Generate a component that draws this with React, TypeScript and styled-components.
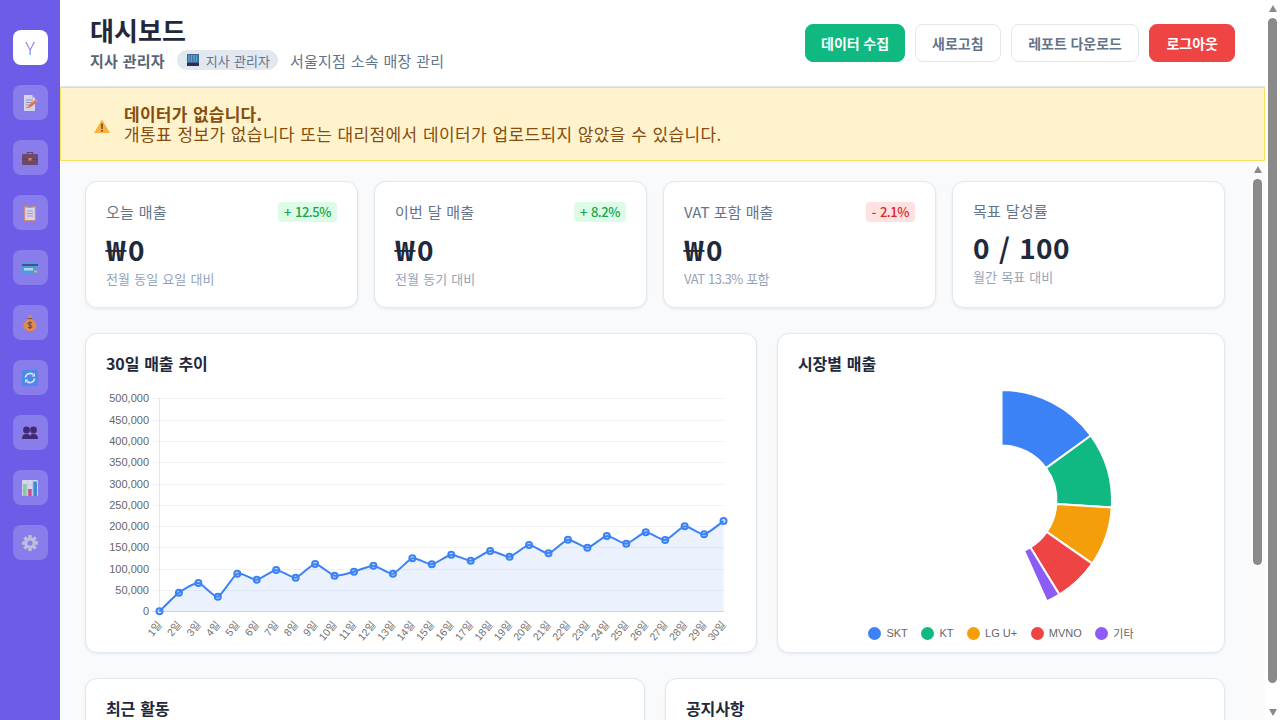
import React from 'react';
import styled, { createGlobalStyle } from 'styled-components';

const Global = createGlobalStyle`
  html, body { margin: 0; padding: 0; height: 100%; overflow: hidden; }
  body { font-family: "Noto Sans CJK KR", "Noto Sans", sans-serif; background: #fff; }
  #root { height: 100%; }
  * { box-sizing: border-box; }
`;

const Shell = styled.div`display: flex; width: 1280px; height: 720px; overflow: hidden;`;
const Sidebar = styled.nav`
  width: 60px; flex: none; background: #6c5ce7; display: flex; flex-direction: column;
  align-items: center; gap: 20px; padding-top: 30px;
`;
const NavButton = styled.div`
  width: 35px; height: 35px; flex: none; border-radius: 8px; background: rgba(255,255,255,.2);
  display: flex; align-items: center; justify-content: center;
`;
const Logo = styled(NavButton)`
  background: #fff; color: #6c5ce7; font: 300 18px "Open Sans", sans-serif;
`;
const Main = styled.div`flex: 1; min-width: 0; display: flex; flex-direction: column;`;
const Header = styled.header`
  height: 87px; flex: none; background: #fff; border-bottom: 1px solid #e2e8f0;
  display: flex; align-items: center; justify-content: space-between; padding: 0 30px;
`;
const HeadBlock = styled.div`padding-bottom: 2px;`;
const Title = styled.h1`
  margin: 0 0 4px; font-size: 26px; line-height: 32px; font-weight: 700; color: #1e293b; letter-spacing: .1px;
`;
const SubRow = styled.div`display: flex; align-items: center; gap: 12px; height: 20px;`;
const Role = styled.span`font-size: 15px; font-weight: 600; color: #5b6573; letter-spacing: .2px; word-spacing: 1.2px;`;
const Badge = styled.span`
  display: inline-flex; align-items: center; gap: 7px; height: 20px; padding: 0 8px 0 10px; border-radius: 10px;
  background: #e2e8f0; color: #64748b; font-size: 13px; letter-spacing: .04px; word-spacing: 1.3px;
`;
const Branch = styled.span`font-size: 15px; color: #64748b; letter-spacing: .2px; word-spacing: 1.2px;`;
const Actions = styled.div`display: flex; gap: 10px;`;
const Btn = styled.button<{ $kind?: 'green' | 'red'; $pad?: number }>`
  height: 38px; padding: 0 ${p => p.$pad ?? 16}px; border-radius: 8px; font: 600 14px "Noto Sans CJK KR", sans-serif;
  letter-spacing: 0; word-spacing: .5px; white-space: nowrap;
  border: 1px solid ${p => p.$kind === 'green' ? '#10b981' : p.$kind === 'red' ? '#ef4444' : '#e2e8f0'};
  background: ${p => p.$kind === 'green' ? '#10b981' : p.$kind === 'red' ? '#ef4444' : '#fff'};
  color: ${p => p.$kind ? '#fff' : '#64748b'};
`;
const Alert = styled.div`
  height: 74px; flex: none; background: #fff3cd; border: 1px solid #fde05a;
  display: flex; align-items: center; gap: 14px; padding: 0 33px; color: #854d0e;
`;
const AlertIcon = styled.svg`width: 16px; height: 16px; flex: none; margin-top: 4px;`;
const AlertText = styled.div`font-size: 17px; line-height: 20.5px; letter-spacing: .36px; word-spacing: 1.23px;`;
const AlertHead = styled.div`font-weight: 700; letter-spacing: .25px;`;
const Lower = styled.div`flex: 1; min-height: 0; display: flex; overflow: hidden;`;
const Content = styled.main`
  flex: 1; min-width: 0; background: #f8fafc; padding: 20px 25px; overflow: hidden;
  display: flex; flex-direction: column; gap: 25px;
`;
const StatGrid = styled.section`display: grid; grid-template-columns: repeat(4, 1fr); gap: 16px;`;
const Card = styled.div`
  background: #fff; border: 1px solid #e2e8f0; border-radius: 12px; box-shadow: 0 1px 3px rgba(0,0,0,.07);
`;
const StatCard = styled(Card)`padding: 20px; height: 127px;`;
const StatHead = styled.div`display: flex; align-items: center; justify-content: space-between; margin-bottom: 9px;`;
const StatLabel = styled.span<{ $tight?: boolean }>`
  font-size: 15px; line-height: 18px; color: #64748b; word-spacing: 1.1px;
  letter-spacing: ${p => p.$tight ? '-.05px' : '.2px'};
`;
const Delta = styled.span<{ $down?: boolean }>`
  height: 20px; padding: 0 6px; border-radius: 4px; font-size: 13px; line-height: 20px; font-weight: 500;
  letter-spacing: -.45px; word-spacing: 1.5px;
  background: ${p => p.$down ? '#fee2e2' : '#dcfce7'}; color: ${p => p.$down ? '#dc2626' : '#16a34a'};
`;
const StatValue = styled.div`font-size: 28px; line-height: 36px; font-weight: 700; color: #1e293b; letter-spacing: .3px; word-spacing: 2.5px;`;
const Won = styled.span`display: inline-block; width: 22px; transform: scaleX(1.2); transform-origin: left center; letter-spacing: 0;`;
const StatNote = styled.div<{ $tight?: boolean }>`
  margin-top: 3px; font-size: 13px; line-height: 17px; color: #94a3b8; word-spacing: 1.2px;
  letter-spacing: ${p => p.$tight ? '-.55px' : '.04px'};
`;
const ChartGrid = styled.section`display: grid; grid-template-columns: 3fr 2fr; gap: 20px;`;
const ChartCard = styled(Card)`padding: 20px 20px 8px; height: 320px; display: flex; flex-direction: column;`;
const CardTitle = styled.h3`
  margin: 0 0 12px; font-size: 16px; line-height: 18px; font-weight: 700; color: #1e293b; letter-spacing: -.1px; word-spacing: 1.4px;
`;
const PlotSvg = styled.svg`display: block; width: 630px; height: 260px; overflow: visible;`;
const PieSvg = styled.svg`display: block; width: 406px; height: 240px;`;
const Legend = styled.div`display: flex; justify-content: center; gap: 13.6px; height: 18px; align-items: center;`;
const LegendItem = styled.span`
  display: inline-flex; align-items: center; gap: 5px; font: 11px "Liberation Sans", "Noto Sans CJK KR", sans-serif; color: #666;
`;
const Dot = styled.i<{ $c: string }>`width: 13px; height: 13px; border-radius: 50%; background: ${p => p.$c};`;
const BottomGrid = styled.section`display: grid; grid-template-columns: 1fr 1fr; gap: 20px; flex: none;`;
const BottomCard = styled(Card)`padding: 20px; height: 200px;`;
const ScrollTrack = styled.div<{ $bg: string }>`
  width: 15px; flex: none; background: ${p => p.$bg}; display: flex; flex-direction: column; align-items: center; padding-top: 5px;
`;
const ArrowUp = styled.i`
  width: 0; height: 0; flex: none; border-left: 4.5px solid transparent; border-right: 4.5px solid transparent;
  border-bottom: 7px solid #8a8a8a;
`;
const ArrowDown = styled.i`
  width: 0; height: 0; flex: none; margin-top: 26px; border-left: 4.5px solid transparent; border-right: 4.5px solid transparent;
  border-top: 7px solid #8a8a8a;
`;
const Thumb = styled.div<{ $h: number }>`
  width: 9px; height: ${p => p.$h}px; flex: none; margin-top: 6px; border-radius: 5px; background: #8a8a8a;
`;
const Gl = styled.svg`width: 16px; height: 16px; display: block; opacity: .82;`;
const BuildingSvg = styled.svg`width: 12px; height: 12px; flex: none;`;

const MemoIcon = () => (
  <Gl viewBox="0 0 16 16">
    <path d="M2 0h8l3 3v13H2z" fill="#e6e6ea" />
    <path d="M10 0l3 3h-3z" fill="#b9b9c2" />
    <path d="M4 5h7M4 7.5h6M4 10h4M4 12.5h3" stroke="#9a96a8" strokeWidth="1" />
    <path d="M6 13l1-3 6-5 2 2-6 5z" fill="#f0703a" />
    <path d="M13 5l1-1 2 2-1 1z" fill="#f59a7a" />
  </Gl>
);
const CaseIcon = () => (
  <Gl viewBox="0 0 16 16">
    <path d="M5.5 4V2.5h5V4" fill="none" stroke="#5a3a52" strokeWidth="1.2" />
    <rect y="4" width="16" height="11" rx="1" fill="#6a3f4f" />
    <rect x="0" y="9" width="16" height="1" fill="#5a3344" />
    <rect x="6.5" y="8" width="3" height="2.5" fill="#d98a5a" />
  </Gl>
);
const ClipIcon = () => (
  <Gl viewBox="0 0 16 16">
    <rect x="2" y="1" width="12" height="15" rx="1" fill="#e0915a" />
    <rect x="3.2" y="2.5" width="9.6" height="12.5" fill="#e9e9ee" />
    <path d="M5 6h6M5 8.5h6M5 11h6" stroke="#a5a2b2" strokeWidth="1" />
    <rect x="5.5" y="0" width="5" height="2.5" rx=".5" fill="#8f8ba0" />
  </Gl>
);
const CardIcon = () => (
  <Gl viewBox="0 0 16 16">
    <rect y="2.5" width="16" height="11" rx="1" fill="#3aa6e0" />
    <rect y="4" width="16" height="2" fill="#3a4a6a" />
    <rect x="2" y="8" width="9" height="2.5" fill="#bfe6f5" />
    <rect x="12" y="10.5" width="3" height="2" fill="#e8c23a" />
  </Gl>
);
const BagIcon = () => (
  <Gl viewBox="0 0 16 16">
    <path d="M6 0h4L9.5 3h-3z" fill="#e8902a" />
    <rect x="5.8" y="3" width="4.4" height="1.2" fill="#7a4a2a" />
    <path d="M6 4.200h4c2.5 1.5 4.5 4 4.5 7 0 3-2.5 4.800-6.500 4.800s-6.500-1.800-6.500-4.800c0-3 2-5.500 4.500-7z" fill="#f59028" />
    <path d="M10 8c-1-1-4-1-4 .6S10 10 10 11.6 7 13 6 12M8 6.5v7.5" fill="none" stroke="#5a3320" strokeWidth="1" />
  </Gl>
);
const SyncIcon = () => (
  <Gl viewBox="0 0 16 16">
    <rect width="16" height="16" rx="1.5" fill="#3b8fe8" />
    <path d="M3.5 7.5A4.5 4.5 0 0 1 11 4.5M12.5 8.5A4.5 4.5 0 0 1 5 11.5" fill="none" stroke="#eef5ff" strokeWidth="1.7" />
    <path d="M9.5 6.5h3.5V3zM6.5 9.5H3V13z" fill="#eef5ff" />
  </Gl>
);
const PeopleIcon = () => (
  <Gl viewBox="0 0 16 16">
    <circle cx="4.5" cy="5" r="3.4" fill="#2f1a58" />
    <path d="M0 14c0-3.5 1.5-5 4.5-5s4 1.5 4 5z" fill="#2f1a58" />
    <circle cx="11.5" cy="5" r="3.4" fill="#2f1a58" />
    <path d="M7.5 14c0-3.5 1-5 4-5s4.5 1.5 4.5 5z" fill="#2f1a58" />
  </Gl>
);
const BarsIcon = () => (
  <Gl viewBox="0 0 16 16">
    <rect width="16" height="16" rx="1" fill="#e9e9f0" />
    <path d="M5.3 0v16M10.6 0v16M0 5h16M0 10h16" stroke="#c8c8d4" strokeWidth=".6" />
    <rect x="1" y="4" width="3.5" height="12" fill="#7fe08a" />
    <rect x="6.2" y="9" width="3.5" height="7" fill="#e83e7a" />
    <rect x="11.3" y="1.5" width="3.7" height="14.5" fill="#2a8fd8" />
  </Gl>
);
const GearIcon = () => (
  <Gl viewBox="0 0 16 16">
    <g fill="#cfcbd8">
      <circle cx="8" cy="8" r="5.8" />
      {[0, 45, 90, 135, 180, 225, 270, 315].map(a => (
        <rect key={a} x="6.3" y="0" width="3.4" height="3.5" transform={`rotate(${a} 8 8)`} />
      ))}
    </g>
    <circle cx="8" cy="8" r="2.6" fill="#8b7de9" />
  </Gl>
);

const navIcons = [MemoIcon, CaseIcon, ClipIcon, CardIcon, BagIcon, SyncIcon, PeopleIcon, BarsIcon, GearIcon];

const zoomY = [694, 638, 609, 650, 581, 599, 570, 593, 552, 587, 575, 557, 581, 535, 553, 524, 542, 513, 530, 495, 520, 479, 503, 468, 491, 457, 480, 439, 463, 423];
const pts = zoomY.map((z, i) => ({ x: 159.5 + i * 19.45, y: 380 + z / 3 }));
const linePath = () => {
  const t = 0.1;
  let d = `M${pts[0].x} ${pts[0].y}`;
  for (let i = 0; i < pts.length - 1; i++) {
    const p0 = pts[Math.max(i - 1, 0)], p1 = pts[i], p2 = pts[i + 1], p3 = pts[Math.min(i + 2, pts.length - 1)];
    d += `C${(p1.x + (p2.x - p0.x) * t).toFixed(2)} ${(p1.y + (p2.y - p0.y) * t).toFixed(2)} ${(p2.x - (p3.x - p1.x) * t).toFixed(2)} ${(p2.y - (p3.y - p1.y) * t).toFixed(2)} ${p2.x.toFixed(2)} ${p2.y.toFixed(2)}`;
  }
  return d;
};
const yTicks = ['500,000', '450,000', '400,000', '350,000', '300,000', '250,000', '200,000', '150,000', '100,000', '50,000', '0'];

const LineChart = () => {
  const d = linePath();
  const last = pts[pts.length - 1];
  return (
    <PlotSvg viewBox="106 384 630 260">
      {yTicks.map((t, i) => {
        const y = Math.round(398.3 + i * 21.3) + 0.5;
        return (
          <g key={t}>
            <line x1="152" x2="724" y1={y} y2={y} stroke={i === 10 ? '#d4d9e4' : '#f1f3f8'} />
            <text x="149" y={y + 3} textAnchor="end" fontSize="11" fontFamily="Liberation Sans" fill="#666">{t}</text>
          </g>
        );
      })}
      <line x1="159.5" x2="159.5" y1="398" y2="611" stroke="#e4e6ee" />
      <path d={`${d}L${last.x} 611.5L159.5 611.5Z`} fill="rgba(59,130,246,.1)" />
      <path d={d} fill="none" stroke="#3b82f6" strokeWidth="2" />
      {pts.map((p, i) => (
        <circle key={i} cx={p.x} cy={p.y} r="3" fill="rgba(59,130,246,.2)" stroke="#3b82f6" strokeWidth="2" />
      ))}
      {pts.map((p, i) => (
        <text key={i} x={p.x + 3} y="625" textAnchor="end" fontSize="10.5"
          fontFamily="Liberation Sans, Noto Sans CJK KR" fill="#707070"
          transform={`rotate(-50 ${p.x + 3} 625)`}>{i + 1}일</text>
      ))}
    </PlotSvg>
  );
};

const slices = [
  { c: '#3b82f6', a: 0, b: 54 },
  { c: '#10b981', a: 54, b: 93.6 },
  { c: '#f59e0b', a: 93.6, b: 124.8 },
  { c: '#ef4444', a: 124.8, b: 148.4 },
  { c: '#8b5cf6', a: 148.4, b: 155.8 },
];
const polar = (r: number, deg: number) => {
  const t = (deg * Math.PI) / 180;
  return `${(1001.5 + r * Math.sin(t)).toFixed(2)} ${(500.5 - r * Math.cos(t)).toFixed(2)}`;
};
const PieChart = () => (
  <PieSvg viewBox="798 384 406 240">
    {slices.map(s => (
      <path key={s.c} fill={s.c} stroke="#fff" strokeWidth="2"
        d={`M${polar(55, s.a)}L${polar(110.5, s.a)}A110.5 110.5 0 0 1 ${polar(110.5, s.b)}L${polar(55, s.b)}A55 55 0 0 0 ${polar(55, s.a)}Z`} />
    ))}
  </PieSvg>
);

const stats = [
  { label: '오늘 매출', delta: '+ 12.5%', won: true, value: '0', note: '전월 동일 요일 대비' },
  { label: '이번 달 매출', delta: '+ 8.2%', won: true, value: '0', note: '전월 동기 대비' },
  { label: 'VAT 포함 매출', delta: '- 2.1%', down: true, won: true, value: '0', note: 'VAT 13.3% 포함', tight: true },
  { label: '목표 달성률', value: '0 / 100', note: '월간 목표 대비' },
];
const legend = [
  ['SKT', '#3b82f6'], ['KT', '#10b981'], ['LG U+', '#f59e0b'], ['MVNO', '#ef4444'], ['기타', '#8b5cf6'],
];

export default function App() {
  return (
    <Shell>
      <Global />
      <Sidebar>
        <Logo>Y</Logo>
        {navIcons.map((I, i) => <NavButton key={i}><I /></NavButton>)}
      </Sidebar>
      <Main>
        <Header>
          <HeadBlock>
            <Title>대시보드</Title>
            <SubRow>
              <Role>지사 관리자</Role>
              <Badge>
                <BuildingSvg viewBox="0 0 12 12">
                  <rect width="12" height="12" fill="#4a5f9a" />
                  <path d="M2 1v7M4.5 1v7M7 1v7M9.5 1v7" stroke="#47b6c8" strokeWidth="1.4" />
                  <rect y="9" width="12" height="3" fill="#2d2f4a" />
                </BuildingSvg>
                지사 관리자
              </Badge>
              <Branch>서울지점 소속 매장 관리</Branch>
            </SubRow>
          </HeadBlock>
          <Actions>
            <Btn $kind="green" $pad={15}>데이터 수집</Btn>
            <Btn>새로고침</Btn>
            <Btn $pad={16.5}>레포트 다운로드</Btn>
            <Btn $kind="red">로그아웃</Btn>
          </Actions>
        </Header>
        <Alert>
          <AlertIcon viewBox="0 0 16 16">
            <path d="M8 1.5L16 15H0z" fill="#fbb040" />
            <path d="M7.2 5.5h1.6l-.2 5.5H7.4zM7.2 12h1.6v1.6H7.2z" fill="#5a4030" />
          </AlertIcon>
          <AlertText>
            <AlertHead>데이터가 없습니다.</AlertHead>
            <div>개통표 정보가 없습니다 또는 대리점에서 데이터가 업로드되지 않았을 수 있습니다.</div>
          </AlertText>
        </Alert>
        <Lower>
          <Content>
            <StatGrid>
              {stats.map(s => (
                <StatCard key={s.label}>
                  <StatHead>
                    <StatLabel $tight={s.tight}>{s.label}</StatLabel>
                    {s.delta && <Delta $down={s.down}>{s.delta}</Delta>}
                  </StatHead>
                  <StatValue>{s.won && <Won>₩</Won>}{s.value}</StatValue>
                  <StatNote $tight={s.tight}>{s.note}</StatNote>
                </StatCard>
              ))}
            </StatGrid>
            <ChartGrid>
              <ChartCard>
                <CardTitle>30일 매출 추이</CardTitle>
                <LineChart />
              </ChartCard>
              <ChartCard>
                <CardTitle>시장별 매출</CardTitle>
                <PieChart />
                <Legend>
                  {legend.map(([n, c]) => <LegendItem key={n}><Dot $c={c} />{n}</LegendItem>)}
                </Legend>
              </ChartCard>
            </ChartGrid>
            <BottomGrid>
              <BottomCard><CardTitle>최근 활동</CardTitle></BottomCard>
              <BottomCard><CardTitle>공지사항</CardTitle></BottomCard>
            </BottomGrid>
          </Content>
          <ScrollTrack $bg="#fbfbfc">
            <ArrowUp />
            <Thumb $h={386} />
          </ScrollTrack>
        </Lower>
      </Main>
      <ScrollTrack $bg="#fff">
        <ArrowUp />
        <Thumb $h={665} />
        <ArrowDown />
      </ScrollTrack>
    </Shell>
  );
}
